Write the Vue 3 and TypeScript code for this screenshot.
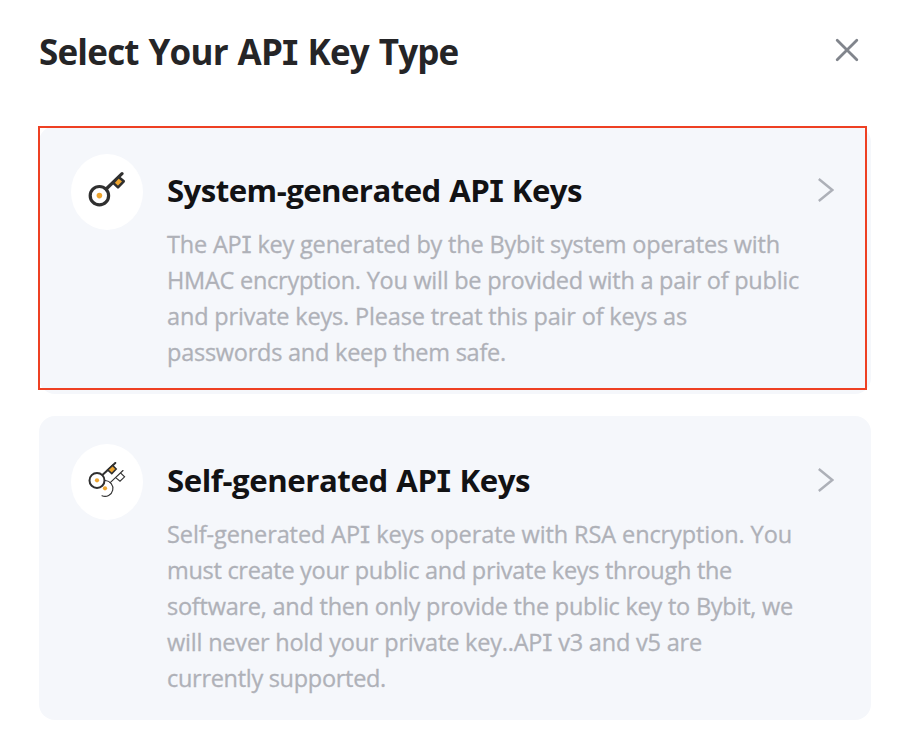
<script setup lang="ts">
import type { Directive } from 'vue'

interface Line {
  text: string
  width: number
}

interface KeyType {
  id: 'system' | 'self'
  title: Line
  lines: Line[]
  selected: boolean
}

const heading: Line = { text: 'Select Your API Key Type', width: 419.5 }

const keyTypes: KeyType[] = [
  {
    id: 'system',
    title: { text: 'System-generated API Keys', width: 415 },
    selected: true,
    lines: [
      { text: 'The API key generated by the Bybit system operates with', width: 613 },
      { text: 'HMAC encryption. You will be provided with a pair of public', width: 632 },
      { text: 'and private keys. Please treat this pair of keys as', width: 520 },
      { text: 'passwords and keep them safe.', width: 339 },
    ],
  },
  {
    id: 'self',
    title: { text: 'Self-generated API Keys', width: 363 },
    selected: false,
    lines: [
      { text: 'Self-generated API keys operate with RSA encryption. You', width: 625 },
      { text: 'must create your public and private keys through the', width: 565 },
      { text: 'software, and then only provide the public key to Bybit, we', width: 626 },
      { text: 'will never hold your private key..API v3 and v5 are', width: 535 },
      { text: 'currently supported.', width: 219 },
    ],
  },
]

// Splits a line so that each capital I can take its serifed form.
const parts = (text: string): string[] => text.split(/(I)/)

// Tracks a line of text so that it fills its measure.
const vFit: Directive<HTMLElement, number> = {
  mounted(el, { value }) {
    const count = el.textContent?.length ?? 1
    const natural = el.getBoundingClientRect().width
    el.style.letterSpacing = `${(value - natural) / count}px`
  },
}
</script>

<template>
  <main class="dialog">
    <header class="head">
      <h1 class="heading">
        <span v-fit="heading.width" class="line"><span v-for="(p, i) in parts(heading.text)" :key="i" :class="{ serif: p === 'I' }">{{ p }}</span></span>
      </h1>
      <svg class="close" viewBox="0 0 24 24" aria-hidden="true">
        <path d="M2.2 2.2 21.8 21.8M21.8 2.2 2.2 21.8" />
      </svg>
    </header>

    <section v-for="k in keyTypes" :key="k.id" class="card" :class="{ selected: k.selected }">
      <div class="badge">
        <svg v-if="k.id === 'system'" class="keys" viewBox="0 0 40 40" aria-hidden="true">
          <circle class="ink thick" cx="12.4" cy="23.7" r="9.2" />
          <circle class="gold" cx="12.4" cy="23.6" r="2.8" />
          <path class="ink thick" d="M19.2 17 35 1.7" />
          <path class="gold tooth" d="M31.6 5 36.8 9.3 31 15.4 26.2 10.8z" />
        </svg>
        <svg v-else class="keys" viewBox="0 0 40 40" aria-hidden="true">
          <path class="ink thin" d="M18.3 18.5A7.9 7.9 0 1 1 15 33.7" />
          <path class="ink thin" d="M23.2 20.7 36 8.5M34 11.3 37.6 14.8 33 19.2 29 15.8" />
          <circle class="mask" cx="10" cy="18.4" r="7.6" />
          <circle class="ink mid" cx="10" cy="18.4" r="7.5" />
          <circle class="gold" cx="10" cy="18.3" r="2.1" />
          <circle class="gold" cx="18" cy="26.3" r="2.1" />
          <path class="ink mid" d="M15.4 12.9 28.3.9" />
          <path class="gold tooth-sm" d="M25.6 3.4 29.2 7 24.8 11.6 20.7 7.9z" />
        </svg>
      </div>
      <div class="body">
        <div class="title-row">
          <h2 class="title">
            <span v-fit="k.title.width" class="line"><span v-for="(p, i) in parts(k.title.text)" :key="i" :class="{ serif: p === 'I' }">{{ p }}</span></span>
          </h2>
          <svg class="chevron" viewBox="0 0 16 24" aria-hidden="true">
            <path d="M.8 1 14.3 12 .8 23" />
          </svg>
        </div>
        <p class="text">
          <template v-for="(l, n) in k.lines" :key="n">
            <span v-fit="l.width" class="line"><span v-for="(p, i) in parts(l.text)" :key="i" :class="{ serif: p === 'I' }">{{ p }}</span></span><br>
          </template>
        </p>
      </div>
    </section>
  </main>
</template>

<style>
body {
  margin: 0;
  background: #fff;
}
</style>

<style scoped>
.dialog {
  box-sizing: border-box;
  width: 901px;
  height: 748px;
  padding: 26px 30px 28px 39px;
  background: #fff;
  font-family: "Open Sans", "Noto Sans", sans-serif;
}
.head {
  display: flex;
  justify-content: space-between;
  height: 100px;
  padding-right: 12px;
}
.heading,
.title,
.text {
  margin: 0;
}
.line {
  display: inline-block;
  white-space: pre;
}
.serif {
  font-family: Inter, sans-serif;
  font-feature-settings: "cv08" 1;
  font-size: 0.98em;
  line-height: 1;
}
.heading {
  font-size: 35px;
  line-height: 52px;
  font-weight: 660;
  word-spacing: 1.5px;
  color: #252527;
}
.close {
  width: 24px;
  height: 24px;
  margin-top: 12px;
  fill: none;
  stroke: #81858c;
  stroke-width: 2.8;
  stroke-linecap: round;
}
.card {
  position: relative;
  display: flex;
  box-sizing: border-box;
  width: 832px;
  margin-bottom: 22px;
  padding: 28px 37px 24px 32px;
  border-radius: 16px;
  background: #f5f7fb;
}
.selected::after {
  content: "";
  position: absolute;
  top: 0;
  left: -1px;
  box-sizing: border-box;
  width: 829px;
  height: 264px;
  border: 2px solid #ee4023;
}
.badge {
  display: flex;
  flex: none;
  align-items: center;
  justify-content: center;
  width: 72px;
  height: 76px;
  margin-right: 24px;
  border-radius: 50%;
  background: #fff;
}
.keys {
  width: 40px;
  height: 40px;
}
.ink {
  fill: none;
  stroke: #303030;
  stroke-linecap: round;
}
.thick {
  stroke-width: 3.2;
}
.mid {
  stroke-width: 2;
}
.thin {
  stroke-width: 1.1;
}
.mask {
  fill: #fff;
}
.gold {
  fill: #eea52f;
}
.tooth {
  stroke: #303030;
  stroke-width: 2.5;
  stroke-linejoin: round;
}
.tooth-sm {
  stroke: #303030;
  stroke-width: 1.5;
}
.body {
  flex: 1;
}
.title-row {
  display: flex;
  justify-content: space-between;
  height: 72px;
}
.title {
  font-size: 31.2px;
  line-height: 73px;
  font-weight: 660;
  word-spacing: 1px;
  color: #121214;
}
.chevron {
  width: 16px;
  height: 24px;
  margin-top: 24px;
  fill: none;
  stroke: #adb0b8;
  stroke-width: 2.4;
}
.text {
  font-size: 23.5px;
  line-height: 36px;
  font-weight: 440;
  color: #afb1b8;
  -webkit-text-stroke: 0.3px #afb1b8;
}
.text .line {
  height: 36px;
  vertical-align: top;
}
</style>
